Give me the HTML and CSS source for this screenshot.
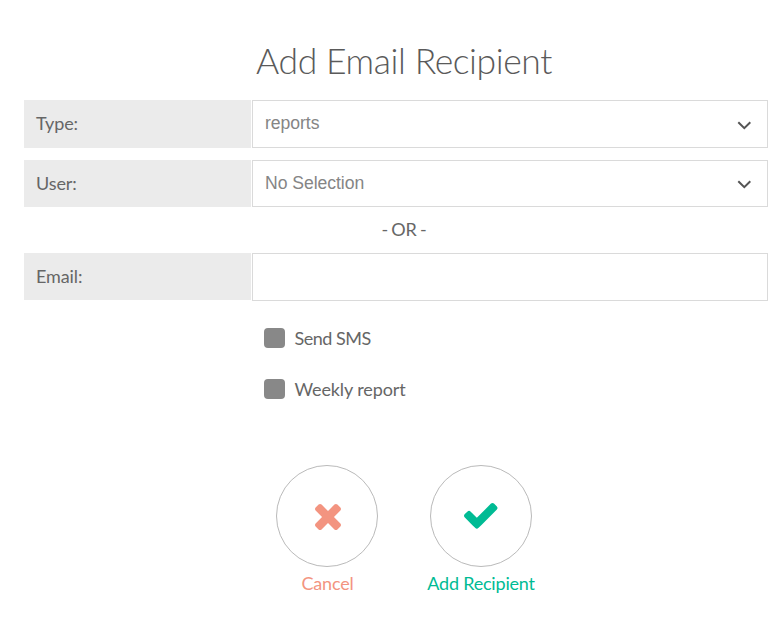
FILE: index.html
```html
<!DOCTYPE html>
<html lang="en">
<head>
<meta charset="utf-8">
<title>Add Email Recipient</title>
<link rel="stylesheet" href="styles.css">
</head>
<body>
<main class="form">
  <h1 class="title">Add Email Recipient</h1>
  <div class="row row-type">
    <div class="label">Type:</div>
    <div class="field"><span class="value">reports</span>
      <svg class="chevron" viewBox="0 0 14 9"><path d="M1.3 1.2 7.3 7.2 13.3 1.2"/></svg></div>
  </div>
  <div class="row row-user">
    <div class="label">User:</div>
    <div class="field"><span class="value">No Selection</span>
      <svg class="chevron" viewBox="0 0 14 9"><path d="M1.3 1.2 7.3 7.2 13.3 1.2"/></svg></div>
  </div>
  <div class="or"><span>- OR -</span></div>
  <div class="row row-email">
    <div class="label">Email:</div>
    <div class="field"></div>
  </div>
  <div class="checks">
    <div class="check"><span class="box"></span><span class="check-text sms">Send SMS</span></div>
    <div class="check"><span class="box"></span><span class="check-text">Weekly report</span></div>
  </div>
  <div class="actions">
    <div class="action cancel">
      <div class="circle"><svg class="times" viewBox="302 366 1188 1188"><path d="M1490 1322q0 40-28 68l-136 136q-28 28-68 28t-68-28l-294-294-294 294q-28 28-68 28t-68-28l-136-136q-28-28-28-68t28-68l294-294-294-294q-28-28-28-68t28-68l136-136q28-28 68-28t68 28l294 294 294-294q28-28 68-28t68 28l136 136q28 28 28 68t-28 68l-294 294 294 294q28 28 28 68z"/></svg></div>
      <span class="action-text">Cancel</span>
    </div>
    <div class="action add">
      <div class="circle"><svg class="tick" viewBox="121 334 1550 1188"><path d="M1671 566q0 40-28 68l-724 724-136 136q-28 28-68 28t-68-28l-136-136-362-362q-28-28-28-68t28-68l136-136q28-28 68-28t68 28l294 295 656-657q28-28 68-28t68 28l136 136q28 28 28 68z"/></svg></div>
      <span class="action-text">Add Recipient</span>
    </div>
  </div>
</main>
</body>
</html>
```
FILE: styles.css
```css
* { box-sizing: border-box; }
body {
  margin: 0;
  background: #fff;
  color: #666;
  font: 18px/24px Lato, sans-serif;
}
.form { width: 744px; margin-left: 24px; padding-top: 37px; }
.title {
  margin: 0 0 15px;
  padding-left: 16px;
  text-align: center;
  font-size: 35.5px;
  line-height: 48px;
  font-weight: 300;
  letter-spacing: -.42px;
  color: #5a5a5a;
}
.row { display: grid; grid-template-columns: 227px 516px; column-gap: 1px; }
.row-type { height: 48px; margin-bottom: 12px; }
.row-user { height: 47px; }
.row-email { height: 48px; }
.row-email .label { margin-bottom: 1px; }
.label { background: #ebebeb; padding: 11px 12px 0 12px; letter-spacing: -.1px; }
.field {
  display: flex;
  justify-content: space-between;
  border: 1px solid #dadada;
  padding: 10px 16px 0 12px;
}
.value { font-family: "Liberation Sans", sans-serif; font-size: 17.6px; letter-spacing: -.05px; color: #858585; }
.chevron { width: 14px; height: 9px; margin-top: 10px; fill: none; stroke: #555; stroke-width: 2; }
.row-user .chevron { margin-top: 9px; }
.or { height: 46px; padding: 10px 0 0 16px; text-align: center; letter-spacing: -.2px; word-spacing: -1.1px; }
.checks { padding: 26px 0 0 240px; }
.check { display: flex; align-items: center; height: 24px; margin-bottom: 27px; }
.box { width: 21px; height: 20px; margin-right: 9.5px; border-radius: 4px; background: #888; position: relative; top: -1px; }
.check-text { position: relative; top: -1px; letter-spacing: -.1px; }
.sms { letter-spacing: -.5px; }
.actions { display: flex; padding-left: 226px; margin-top: 63px; }
.action { width: 154px; display: flex; flex-direction: column; align-items: center; }
.circle {
  width: 102px;
  height: 102px;
  border: 1px solid #bababa;
  border-radius: 50%;
  display: flex;
  align-items: center;
  justify-content: center;
}
.action-text { margin-top: 4px; letter-spacing: -.2px; }
.cancel { color: #f39480; }
.cancel .action-text { padding-left: 1px; }
.add { color: #00bb94; }
.times { width: 26px; height: 26px; margin: 2px 0 0 1px; fill: currentColor; }
.tick { width: 33.5px; height: 25.7px; fill: currentColor; }
```
